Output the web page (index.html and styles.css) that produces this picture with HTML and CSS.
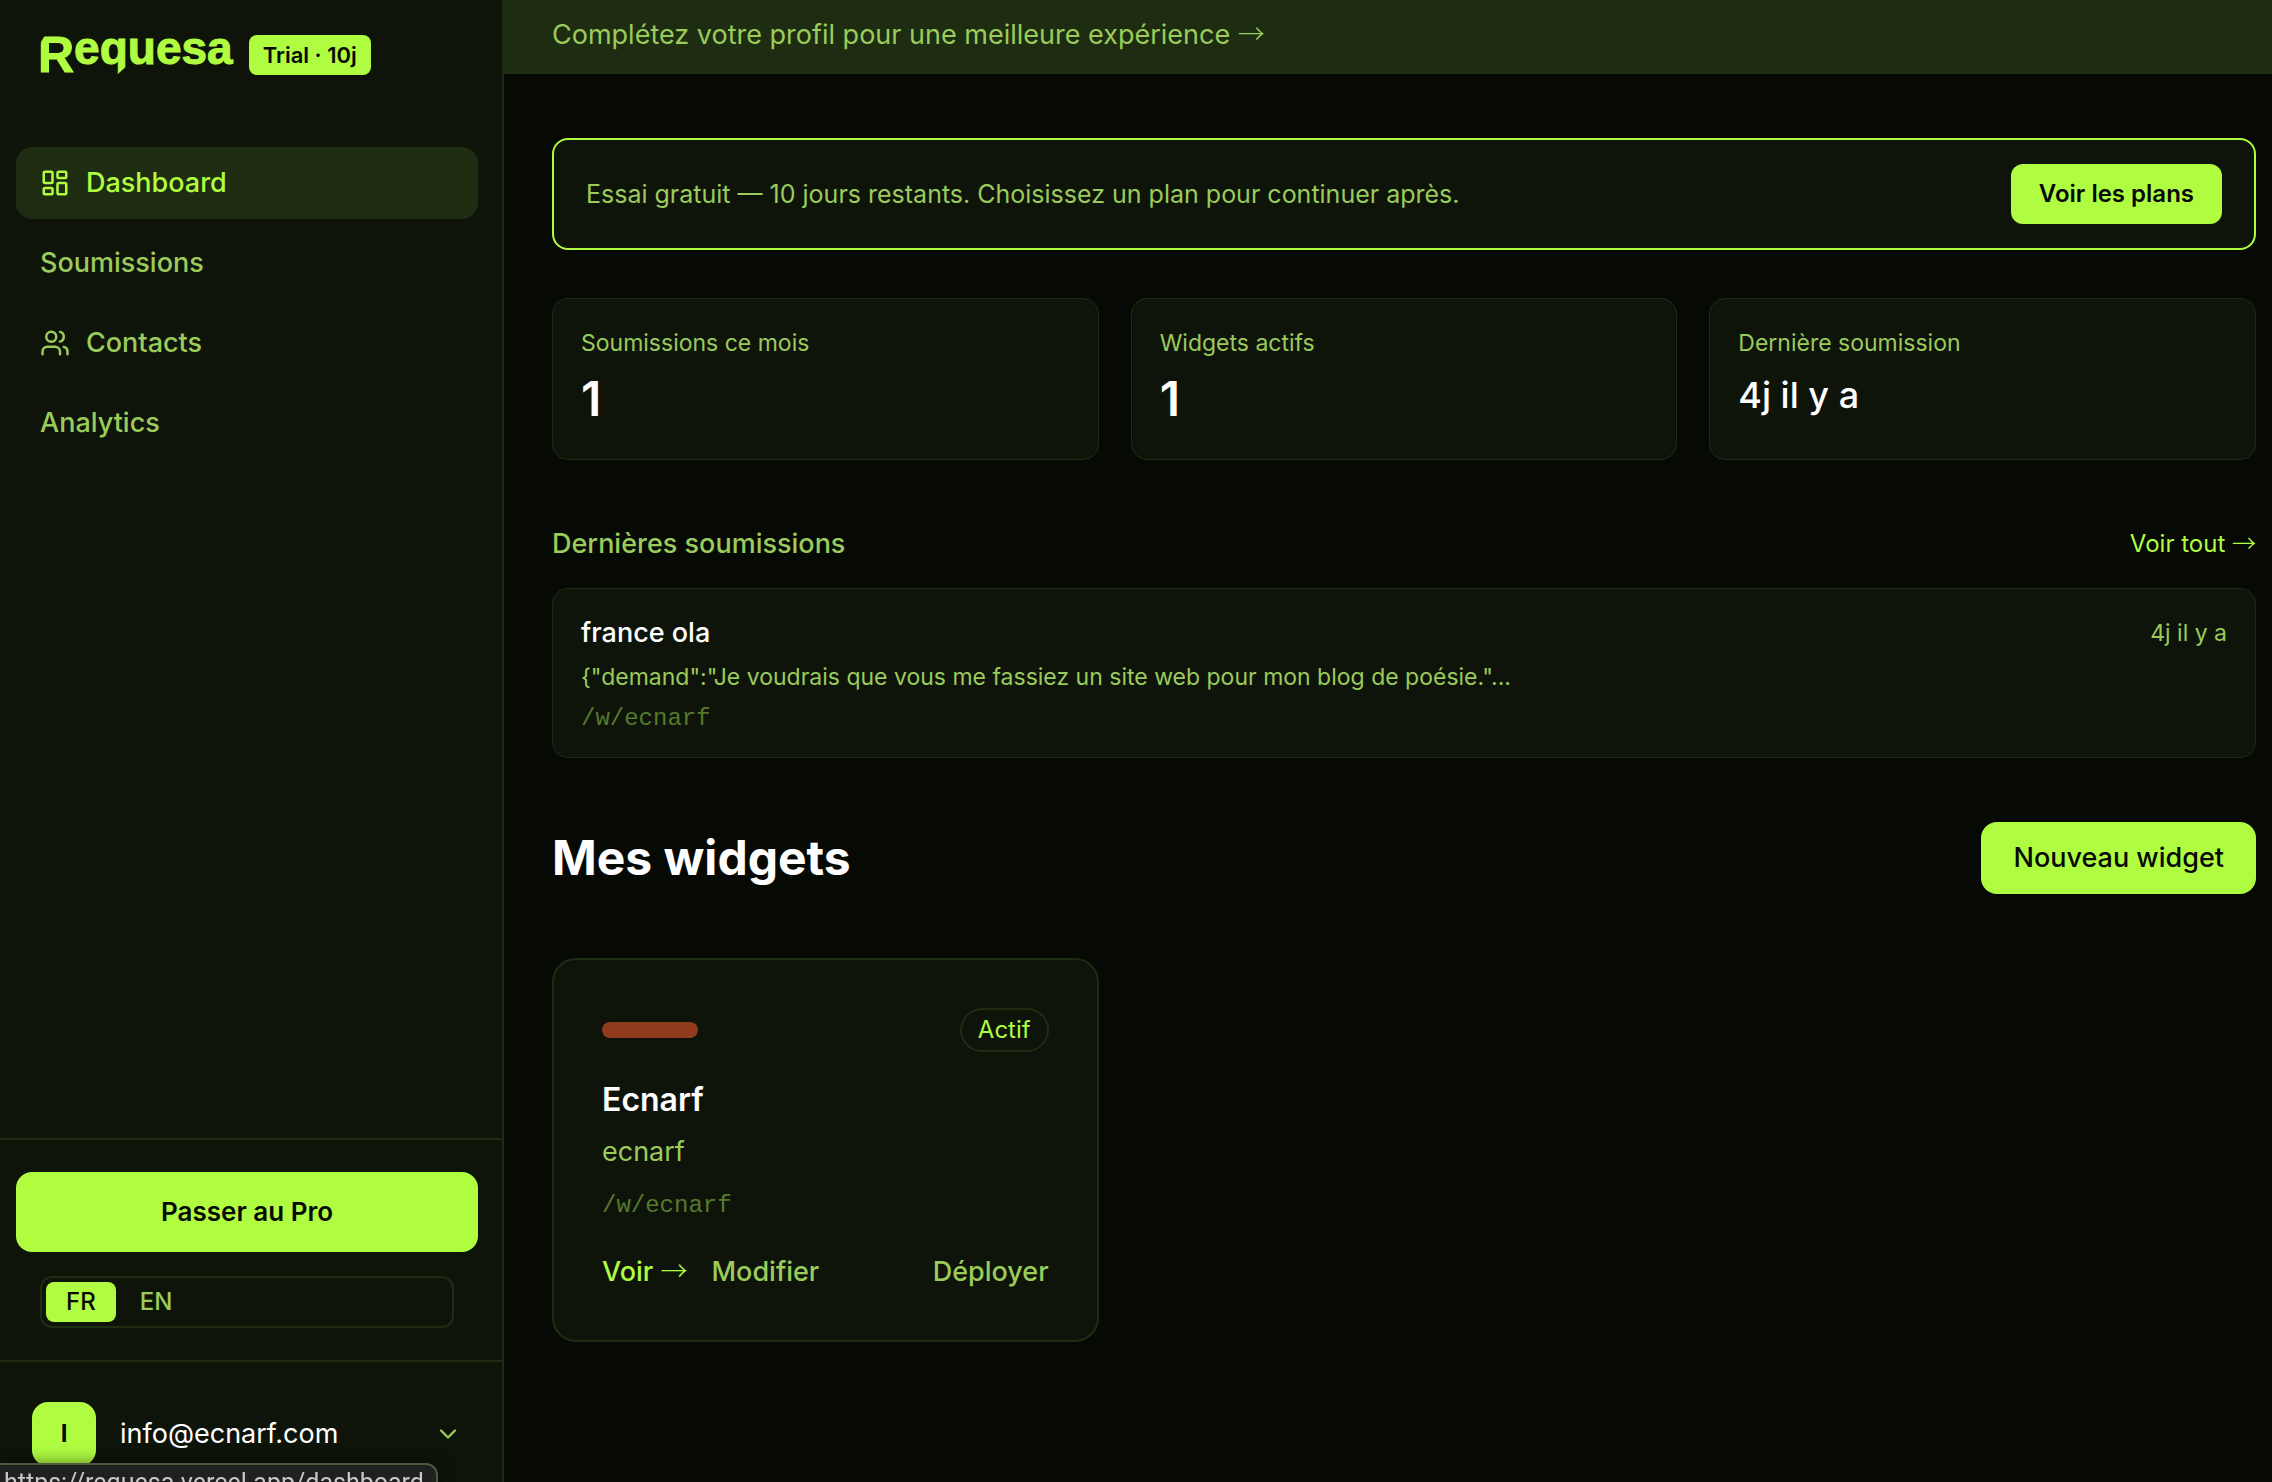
FILE: index.html
```html
<!DOCTYPE html>
<html lang="fr">
<head>
    <meta charset="UTF-8">
    <meta name="viewport" content="width=device-width, initial-scale=1.0">
    <title>Requesa - Dashboard</title>
    <link rel="stylesheet" href="styles.css">
</head>
<body>
    <div class="app">
        <aside class="sidebar">
            <div class="brand">
                <a class="logo" href="#"><span class="logo-r">R</span><span class="logo-rest">e<span class="logo-q">q</span>uesa</span></a>
                <span class="trial-badge">Trial · 10j</span>
            </div>

            <nav class="nav">
                <a class="nav-link active" href="#">
                    <svg class="icon" viewBox="0 0 24 24"><rect x="3" y="3" width="7" height="9" rx="1"/><rect x="14" y="3" width="7" height="5" rx="1"/><rect x="14" y="12" width="7" height="9" rx="1"/><rect x="3" y="16" width="7" height="5" rx="1"/></svg>
                    Dashboard
                </a>
                <a class="nav-link" href="#">Soumissions</a>
                <a class="nav-link" href="#">
                    <svg class="icon" viewBox="0 0 24 24"><path d="M16 21v-2a4 4 0 0 0-4-4H6a4 4 0 0 0-4 4v2"/><circle cx="9" cy="7" r="4"/><path d="M22 21v-2a4 4 0 0 0-3-3.87"/><path d="M16 3.13a4 4 0 0 1 0 7.75"/></svg>
                    Contacts
                </a>
                <a class="nav-link" href="#">Analytics</a>
            </nav>

            <div class="sidebar-actions">
                <button type="button" class="btn btn-pro">Passer au Pro</button>
                <div class="lang">
                    <button type="button" class="lang-btn selected">FR</button>
                    <button type="button" class="lang-btn">EN</button>
                </div>
            </div>

            <button type="button" class="account">
                <span class="avatar">I</span>
                <span class="email">info@ecnarf.com</span>
                <svg class="chevron" viewBox="0 0 24 24"><path d="m6 9 6 6 6-6"/></svg>
            </button>
        </aside>

        <main class="main">
            <a class="profile-banner" href="#">Complétez votre profil pour une meilleure expérience <span class="arrow">→</span></a>

            <div class="content">
                <section class="trial">
                    <p>Essai gratuit — 10 jours restants. Choisissez un plan pour continuer après.</p>
                    <button type="button" class="btn btn-plans">Voir les plans</button>
                </section>

                <section class="stats">
                    <div class="stat">
                        <p class="stat-label">Soumissions ce mois</p>
                        <p class="stat-value">1</p>
                    </div>
                    <div class="stat">
                        <p class="stat-label">Widgets actifs</p>
                        <p class="stat-value">1</p>
                    </div>
                    <div class="stat">
                        <p class="stat-label">Dernière soumission</p>
                        <p class="stat-value stat-date">4j il y a</p>
                    </div>
                </section>

                <section class="latest">
                    <div class="latest-head">
                        <h2>Dernières soumissions</h2>
                        <a href="#">Voir tout <span class="arrow">→</span></a>
                    </div>
                    <article class="submission">
                        <div>
                            <h3>france ola</h3>
                            <p class="demand">{"demand":"Je voudrais que vous me fassiez un site web pour mon blog de poésie."...</p>
                            <p class="path">/w/ecnarf</p>
                        </div>
                        <time>4j il y a</time>
                    </article>
                </section>

                <div class="widgets-head">
                    <h1>Mes widgets</h1>
                    <button type="button" class="btn btn-new">Nouveau widget</button>
                </div>

                <section class="widgets">
                    <article class="widget">
                        <div class="widget-top">
                            <span class="widget-color"></span>
                            <span class="status">Actif</span>
                        </div>
                        <h2>Ecnarf</h2>
                        <p class="widget-slug">ecnarf</p>
                        <p class="path">/w/ecnarf</p>
                        <div class="widget-links">
                            <a class="view" href="#">Voir <span class="arrow">→</span></a>
                            <a href="#">Modifier</a>
                            <a class="deploy" href="#">Déployer</a>
                        </div>
                    </article>
                </section>
            </div>
        </main>
    </div>

    <div class="url-hint">https://requesa.vercel.app/dashboard</div>
</body>
</html>
```

FILE: styles.css
```css
* {
    box-sizing: border-box;
}

:root {
    --lime: #affc41;
    --green: #9acb5b;
    --dim: #557a2b;
    --bg: #070a04;
    --panel: #0f140a;
    --line: #1e2d11;
}

body {
    margin: 0;
    background-color: var(--bg);
    color: white;
    font-family: Inter, "Liberation Sans", sans-serif;
    font-size: 27px;
    line-height: 40px;
    overflow: hidden;
}

h1, h2, h3, p {
    margin: 0;
}

a {
    color: inherit;
    text-decoration: none;
}

button {
    border: none;
    background: none;
    color: inherit;
    font: inherit;
    cursor: pointer;
}

.arrow {
    font-family: "Noto Sans CJK JP", sans-serif;
    font-weight: 300;
    line-height: 1;
}

.app {
    display: flex;
    height: 100vh;
}

/* sidebar */

.sidebar {
    flex: 0 0 504px;
    display: flex;
    flex-direction: column;
    background-color: var(--panel);
    border-right: 2px solid var(--line);
}

.brand {
    display: flex;
    align-items: center;
    gap: 16px;
    padding: 35px 40px 0 38px;
}

.logo {
    height: 40px;
    color: var(--lime);
    font-family: "Liberation Sans", Arial, sans-serif;
    font-size: 46px;
    font-weight: bold;
    -webkit-text-stroke: 1px var(--lime);
}

/* the R hangs below the other letters and has a cut corner, like the tail of the q */
.logo-r {
    display: inline-block;
    font-size: 50px;
    clip-path: polygon(12px -8px, 100% -8px, 100% 100%, 0 100%, 0 12px);
}

.logo-rest {
    vertical-align: 8px;
    line-height: 0;
}

.logo-q {
    display: inline-block;
    line-height: 24px;
    clip-path: polygon(0 -8px, 100% -8px, 100% 29px, 17px 39px, 0 39px);
}

.trial-badge {
    padding: 4px 14px;
    border-radius: 8px;
    background-color: var(--lime);
    color: var(--bg);
    font-size: 22px;
    font-weight: 600;
    line-height: 32px;
}

.nav {
    flex: 1;
    display: flex;
    flex-direction: column;
    gap: 8px;
    padding: 72px 24px 0 16px;
}

.nav-link {
    display: flex;
    align-items: center;
    gap: 16px;
    padding: 16px 24px;
    border-radius: 16px;
    color: var(--green);
    font-weight: 500;
}

.nav-link.active {
    background-color: var(--line);
    color: var(--lime);
}

.icon, .chevron {
    width: 30px;
    height: 30px;
    fill: none;
    stroke: currentColor;
    stroke-width: 2;
    stroke-linecap: round;
    stroke-linejoin: round;
}

.sidebar-actions {
    padding: 32px 24px 32px 16px;
    border-top: 2px solid var(--line);
}

.btn {
    background-color: var(--lime);
    color: var(--bg);
}

.btn-pro {
    width: 100%;
    padding: 20px;
    border-radius: 16px;
    font-size: 26px;
    font-weight: 600;
}

.lang {
    display: flex;
    gap: 4px;
    margin: 24px 24px 0;
    padding: 4px;
    border: 2px solid var(--line);
    border-radius: 12px;
}

.lang-btn {
    padding: 0 20px;
    border-radius: 8px;
    color: var(--green);
    font-size: 24px;
    font-weight: 500;
}

.lang-btn.selected {
    background-color: var(--lime);
    color: var(--bg);
}

.account {
    display: flex;
    align-items: center;
    gap: 24px;
    padding: 40px 40px 16px 32px;
    border-top: 2px solid var(--line);
    text-align: left;
}

.avatar {
    width: 64px;
    border-radius: 16px;
    background-color: var(--lime);
    color: var(--bg);
    font-size: 24px;
    font-weight: 700;
    line-height: 64px;
    text-align: center;
}

.email {
    flex: 1;
}

.chevron {
    width: 28px;
    height: 28px;
    color: var(--green);
}

/* main column */

.main {
    flex: 1;
    min-width: 0;
}

.profile-banner {
    display: block;
    padding: 15px 48px 19px;
    background-color: var(--line);
    color: var(--green);
}

.content {
    padding: 64px 16px 64px 48px;
}

.trial {
    display: flex;
    align-items: center;
    justify-content: space-between;
    padding: 24px 32px;
    border: 2px solid var(--lime);
    border-radius: 16px;
    background-color: var(--panel);
    color: var(--green);
    font-size: 25px;
}

.btn-plans {
    padding: 10px 28px;
    border-radius: 12px;
    font-size: 24px;
    font-weight: 600;
}

.stats, .widgets {
    display: grid;
    grid-template-columns: repeat(3, 1fr);
    gap: 32px;
}

.stats {
    margin-top: 48px;
}

.stat {
    padding: 28px;
    border: 1px solid var(--line);
    border-radius: 16px;
    background-color: var(--panel);
}

.stat-label {
    color: var(--green);
    font-size: 23px;
    line-height: 32px;
}

.stat-value {
    margin-top: 8px;
    font-size: 48px;
    font-weight: 600;
    line-height: 64px;
}

.stat-date {
    font-size: 36px;
    font-weight: 500;
    line-height: 56px;
}

.latest {
    margin-top: 64px;
}

.latest-head {
    display: flex;
    align-items: center;
    justify-content: space-between;
    margin-bottom: 24px;
}

.latest-head h2 {
    color: var(--green);
    font-size: 27px;
    font-weight: 500;
}

.latest-head a {
    color: var(--lime);
    font-size: 24px;
}

.submission {
    display: flex;
    justify-content: space-between;
    padding: 24px 28px 16px;
    border: 1px solid var(--line);
    border-radius: 16px;
    background-color: var(--panel);
}

.submission h3 {
    font-size: 27px;
    font-weight: 500;
}

.submission time, .demand {
    color: var(--green);
    font-size: 23px;
}

.demand {
    margin-top: 4px;
}

.path {
    color: var(--dim);
    font-family: "Liberation Mono", monospace;
    font-size: 24px;
    line-height: 44px;
}

.widgets-head {
    display: flex;
    align-items: center;
    justify-content: space-between;
    margin: 64px 0;
}

.widgets-head h1 {
    font-size: 48px;
    font-weight: 700;
    line-height: 64px;
}

.btn-new {
    padding: 16px 32px;
    border-radius: 16px;
    font-weight: 500;
}

.widget {
    padding: 48px;
    border: 2px solid var(--line);
    border-radius: 24px;
    background-color: var(--panel);
}

.widget-top {
    display: flex;
    align-items: center;
    justify-content: space-between;
    margin-bottom: 24px;
}

.widget-color {
    width: 96px;
    height: 16px;
    border-radius: 8px;
    background-color: #923a1c;
}

.status {
    padding: 0 16px;
    border: 2px solid var(--line);
    border-radius: 24px;
    color: var(--lime);
    font-size: 24px;
}

.widget h2 {
    font-size: 32px;
    font-weight: 600;
    line-height: 48px;
}

.widget-slug {
    margin: 8px 0 12px;
    color: var(--green);
}

.widget-links {
    display: flex;
    gap: 24px;
    margin-top: 24px;
    color: var(--green);
    font-weight: 500;
}

.view {
    color: var(--lime);
}

.deploy {
    margin-left: auto;
}

/* link address shown in the window corner, over the sidebar */

.url-hint {
    position: fixed;
    left: -2px;
    bottom: -23px;
    padding: 2px 12px 4px 4px;
    border: 2px solid #4e5a40;
    border-radius: 0 12px 0 0;
    background-color: #1f2020;
    box-shadow: 0 0 16px rgba(0, 0, 0, 0.5);
    color: #c8c8c8;
    font-family: Roboto, sans-serif;
    font-size: 25px;
    line-height: 32px;
}
```
